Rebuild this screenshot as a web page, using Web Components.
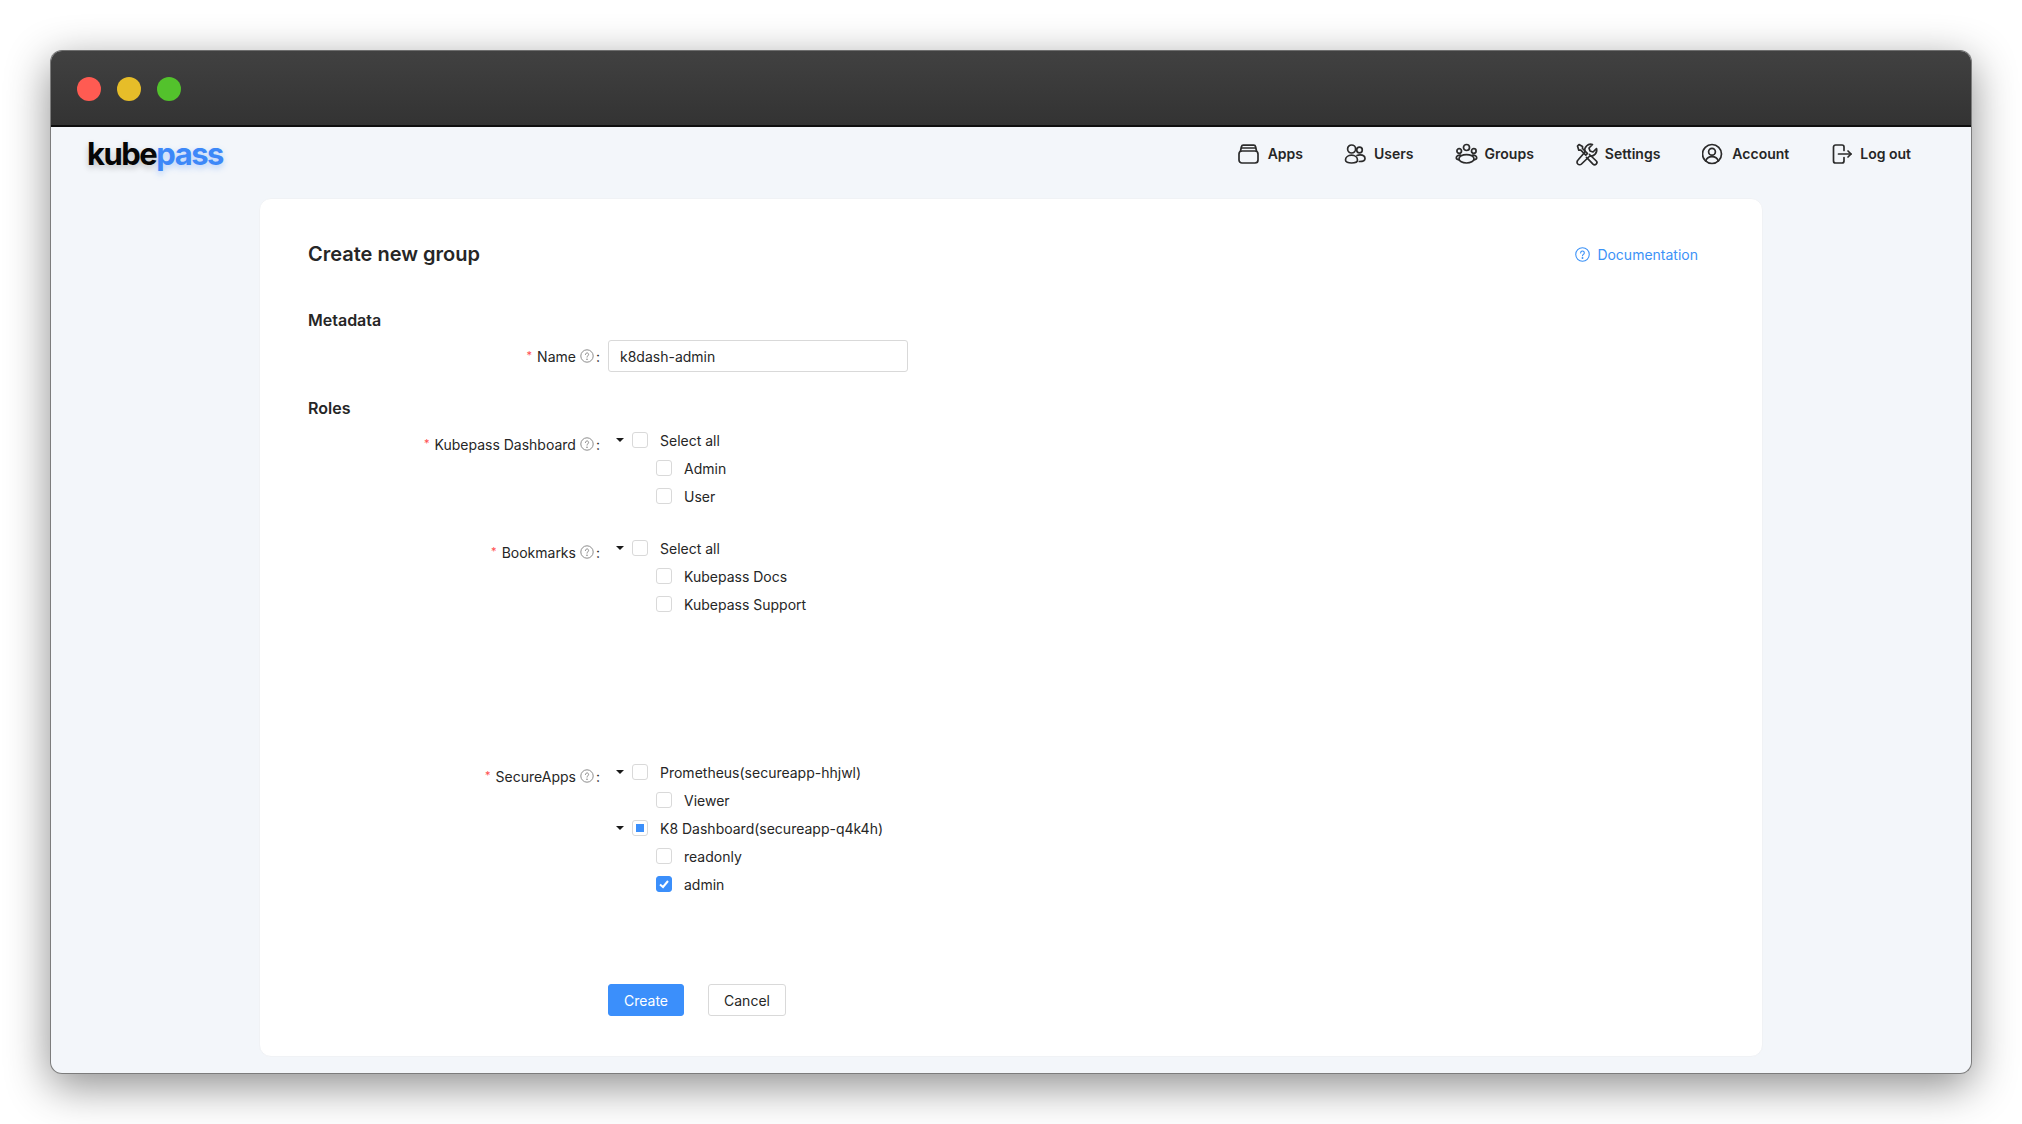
<!DOCTYPE html>
<html>
<head>
<meta charset="utf-8">
<title>kubepass</title>
<style>
  html, body { margin: 0; height: 100%; background: #fff; }
  body { font-family: Inter, "Liberation Sans", sans-serif; color: #262626; overflow: hidden; }
</style>
</head>
<body>
<app-window>
  <top-nav slot="nav">
    <nav-item icon="apps" gap="41">Apps</nav-item>
    <nav-item icon="users" gap="41">Users</nav-item>
    <nav-item icon="groups" gap="41">Groups</nav-item>
    <nav-item icon="settings" gap="42">Settings</nav-item>
    <nav-item icon="account" gap="41">Account</nav-item>
    <nav-item icon="logout">Log out</nav-item>
  </top-nav>
  <form-card>
    <form-section title="Metadata">
      <form-row label="Name" h="32"><text-input value="k8dash-admin"></text-input></form-row>
    </form-section>
    <form-section title="Roles">
      <form-row label="Kubepass Dashboard" h="84" after="24" tree>
        <tree-node caret>Select all</tree-node>
        <tree-node child>Admin</tree-node>
        <tree-node child>User</tree-node>
      </form-row>
      <form-row label="Bookmarks" h="84" after="140" tree>
        <tree-node caret>Select all</tree-node>
        <tree-node child>Kubepass Docs</tree-node>
        <tree-node child>Kubepass Support</tree-node>
      </form-row>
      <form-row label="SecureApps" h="140" tree>
        <tree-node caret>Prometheus(secureapp-hhjwl)</tree-node>
        <tree-node child>Viewer</tree-node>
        <tree-node caret state="half">K8 Dashboard(secureapp-q4k4h)</tree-node>
        <tree-node child>readonly</tree-node>
        <tree-node child state="checked">admin</tree-node>
      </form-row>
    </form-section>
    <form-actions></form-actions>
  </form-card>
</app-window>

<script>
const NAV_ICONS = {
  apps: '<rect x="1" y="9" width="19" height="12" rx="3"/><path d="M2.500 9 3.500 4.500a1.800 1.800 0 0 1 1.800-1.400h10.400a1.800 1.800 0 0 1 1.800 1.400L18.500 9"/><path d="M3.500 6h14"/>',
  users: '<circle cx="7.600" cy="7" r="4"/><circle cx="15.500" cy="8" r="2.800"/><path d="M1.500 18c0-2.800 2.700-4.800 6-4.800s6 2 6 4.800c0 2-2.700 3-6 3s-6-1-6-3z"/><path d="M13 13.500c.9-.4 2-.6 3-.6 3 0 5 1.500 5 3.800 0 1.900-2 2.800-5.700 2.800"/>',
  groups: '<circle cx="11.500" cy="5.500" r="3"/><circle cx="4.200" cy="9" r="2.300"/><circle cx="18.800" cy="9" r="2.300"/><ellipse cx="11.500" cy="16.800" rx="7.500" ry="4.200"/><path d="M5.500 13.200c-2.300-.3-4.200.9-4.200 2.500 0 1.200 1.100 1.900 2.700 2.100"/><path d="M17.500 13.200c2.300-.3 4.200.9 4.200 2.500 0 1.200-1.100 1.900-2.700 2.100"/>',
  settings: '<path d="M21.500 6.500 18 10l-3-1-1-3 3.500-3.500a6 6 0 0 0-7.500 7.500L2.800 18.300a2.600 2.600 0 0 0 3.700 3.700l8.300-8a6 6 0 0 0 6.700-7.500z"/><path d="M2.500 4 4 2.500l3.500 2v2l5 5-1.700 1.700-5-5h-2z"/><path d="M14.500 12.500l6.800 6.500a2.300 2.300 0 0 1-3.300 3.200l-6.500-6.800"/>',
  account: '<circle cx="10" cy="12" r="9.500"/><circle cx="10" cy="9.700" r="3.400"/><path d="M3.800 19c.8-2.700 3.200-4.300 6.200-4.300s5.400 1.600 6.200 4.300"/>',
  logout: '<path d="M14 8.500V5a2 2 0 0 0-2-2H5.500a2 2 0 0 0-2 2v14a2 2 0 0 0 2 2H12a2 2 0 0 0 2-2v-3.500"/><path d="M8.500 12H21"/><path d="M18 9l3 3-3 3"/>'
};

class AppWindow extends HTMLElement {
  connectedCallback() {
    this.attachShadow({ mode: 'open' });
    this.shadowRoot.innerHTML = `
      <style>
        :host {
          display: flex;
          flex-direction: column;
          box-sizing: border-box;
          width: 1922px;
          height: 1024px;
          margin: 50px 0 0 50px;
          border-radius: 12px;
          overflow: hidden;
          background: #f3f6fa;
          border: 1px solid #7c7c7c;
          border-top-color: #6e6e6e;
          box-shadow: 0 12px 44px rgba(0,0,0,.45);
        }
        .bar {
          flex: none;
          height: 76px;
          border-bottom: 2px solid #0e0e0e;
          background: linear-gradient(#414141, #333);
          display: flex;
          align-items: center;
          gap: 16px;
          padding: 2px 0 0 26px;
          box-sizing: border-box;
        }
        .dot { width: 24px; height: 24px; border-radius: 50%; }
        .main { flex: 1; display: flex; flex-direction: column; align-items: center; }
      </style>
      <div class="bar">
        <span class="dot" style="background:#ff5b52"></span>
        <span class="dot" style="background:#e6bd29"></span>
        <span class="dot" style="background:#53c22c"></span>
      </div>
      <slot name="nav"></slot>
      <div class="main"><slot></slot></div>`;
  }
}

class TopNav extends HTMLElement {
  connectedCallback() {
    this.attachShadow({ mode: 'open' });
    this.shadowRoot.innerHTML = `
      <style>
        :host {
          display: flex;
          align-items: flex-start;
          justify-content: space-between;
          height: 71px;
          padding: 0 60px 0 36px;
        }
        .logo {
          font-size: 31px;
          font-weight: 700;
          line-height: 40px;
          letter-spacing: -1.5px;
          margin-top: 7px;
          color: #060606;
          text-shadow: 0 3px 6px rgba(0,0,0,.22);
        }
        .logo span { color: #3d88f8; text-shadow: 0 3px 6px rgba(61,136,248,.35); }
        nav { display: flex; margin-top: 15px; }
      </style>
      <div class="logo">kube<span>pass</span></div>
      <nav><slot></slot></nav>`;
  }
}

class NavItem extends HTMLElement {
  connectedCallback() {
    this.attachShadow({ mode: 'open' });
    const gap = this.getAttribute('gap') || 0;
    this.shadowRoot.innerHTML = `
      <style>
        :host {
          display: flex;
          align-items: center;
          gap: 6px;
          height: 24px;
          margin-right: ${gap}px;
          font-size: 14px;
          font-weight: 600;
          color: #262626;
        }
        span { padding-bottom: 2px; }
        svg { width: 24px; height: 24px; fill: none; stroke: #2b2b2b; stroke-width: 1.700; stroke-linecap: round; stroke-linejoin: round; }
      </style>
      <svg viewBox="0 0 24 24">${NAV_ICONS[this.getAttribute('icon')]}</svg>
      <span><slot></slot></span>`;
  }
}

class FormCard extends HTMLElement {
  connectedCallback() {
    this.attachShadow({ mode: 'open' });
    this.shadowRoot.innerHTML = `
      <style>
        :host {
          display: block;
          box-sizing: border-box;
          width: 1504px;
          height: 859px;
          padding: 41px 64px 0 48px;
          background: #fff;
          border: 1px solid #f0f2f5;
          border-radius: 12px;
        }
        header { display: flex; justify-content: space-between; align-items: center; height: 28px; margin-bottom: 42px; }
        h1 { margin: 0; font-size: 20px; font-weight: 600; color: #262626; }
        a { display: flex; align-items: center; gap: 7px; color: #3c92f7; font-size: 14px; text-decoration: none; }
        svg { width: 15px; height: 15px; fill: none; stroke: currentColor; }
      </style>
      <header>
        <h1>Create new group</h1>
        <a href="#">
          <svg viewBox="0 0 14 14"><circle cx="7" cy="7" r="6.300"/><path d="M5.300 5.500a1.700 1.700 0 1 1 2.600 1.400c-.6.400-.9.700-.9 1.300" stroke-linecap="round"/><circle cx="7" cy="10.200" r=".4" fill="currentColor"/></svg>
          Documentation
        </a>
      </header>
      <slot></slot>`;
  }
}

class FormSection extends HTMLElement {
  connectedCallback() {
    this.attachShadow({ mode: 'open' });
    this.shadowRoot.innerHTML = `
      <style>
        :host { display: block; margin-bottom: 26px; }
        h2 { margin: 0 0 10px; font-size: 16px; line-height: 20px; font-weight: 600; color: #262626; }
      </style>
      <h2>${this.getAttribute('title')}</h2>
      <slot></slot>`;
  }
}

class FormRow extends HTMLElement {
  connectedCallback() {
    this.attachShadow({ mode: 'open' });
    this.shadowRoot.innerHTML = `
      <style>
        :host {
          display: grid;
          grid-template-columns: 292px 1fr;
          column-gap: 8px;
          height: ${this.getAttribute('h')}px;
          margin-bottom: ${this.getAttribute('after') || 0}px;
          font-size: 14px;
          color: #262626;
        }
        .label { display: flex; align-items: center; justify-content: flex-end; height: 32px; }
        .req { color: #ff4d4f; font-size: 11px; margin-right: 5px; position: relative; top: -1px; }
        svg { width: 14px; height: 14px; margin: 0 2px 0 4px; fill: none; stroke: #8c8c8c; }
        .body { margin-top: ${this.hasAttribute('tree') ? -2 : 0}px; }
      </style>
      <div class="label">
        <span class="req">*</span>${this.getAttribute('label')}
        <svg viewBox="0 0 14 14"><circle cx="7" cy="7" r="6.200"/><path d="M5.400 5.500a1.600 1.600 0 1 1 2.500 1.300c-.6.400-.9.700-.9 1.300" stroke-linecap="round"/><circle cx="7" cy="10.200" r=".35" fill="#8c8c8c"/></svg>:
      </div>
      <div class="body"><slot></slot></div>`;
  }
}

class TextInput extends HTMLElement {
  connectedCallback() {
    this.attachShadow({ mode: 'open' });
    this.shadowRoot.innerHTML = `
      <style>
        :host { display: block; width: 300px; height: 32px; }
        input {
          box-sizing: border-box;
          width: 100%;
          height: 100%;
          padding: 0 11px;
          border: 1px solid #d9d9d9;
          border-radius: 3px;
          font: 14px Inter, sans-serif;
          color: #262626;
          outline: none;
        }
      </style>
      <input type="text" value="${this.getAttribute('value')}">`;
  }
}

class TreeNode extends HTMLElement {
  connectedCallback() {
    this.attachShadow({ mode: 'open' });
    const child = this.hasAttribute('child');
    const state = this.getAttribute('state') || '';
    this.shadowRoot.innerHTML = `
      <style>
        :host {
          display: flex;
          align-items: center;
          height: 28px;
          padding-left: ${child ? 48 : 8}px;
          font-size: 14px;
          color: #262626;
        }
        .caret {
          width: 0; height: 0; margin-right: 8px;
          border-left: 4px solid transparent;
          border-right: 4px solid transparent;
          border-top: 4px solid #1a1a1a;
        }
        .box {
          box-sizing: border-box;
          display: flex;
          align-items: center;
          justify-content: center;
          width: 16px; height: 16px;
          margin-right: 12px;
          border: 1px solid #d9d9d9;
          border-radius: 3px;
          background: #fff;
        }
        .box.half::after { content: ""; width: 8px; height: 8px; background: #3b8ffb; }
        .box.checked { background: #3b8ffb; border-color: #3b8ffb; }
        .box svg { width: 12px; height: 12px; fill: none; stroke: #fff; stroke-width: 2; }
      </style>
      ${this.hasAttribute('caret') ? '<span class="caret"></span>' : ''}
      <span class="box ${state}">${state === 'checked' ? '<svg viewBox="0 0 12 12"><path d="M2 6.500 5 9l5-6"/></svg>' : ''}</span>
      <slot></slot>`;
  }
}

class FormActions extends HTMLElement {
  connectedCallback() {
    this.attachShadow({ mode: 'open' });
    this.shadowRoot.innerHTML = `
      <style>
        :host { display: flex; gap: 24px; padding: 58px 0 0 300px; }
        button {
          box-sizing: border-box;
          height: 32px;
          border-radius: 3px;
          font: 14px Inter, sans-serif;
          border: 1px solid #d9d9d9;
          background: #fff;
          color: #262626;
          padding: 0;
        }
        .primary { width: 76px; background: #3b8ffb; border-color: #3b8ffb; color: #fff; }
        .plain { width: 78px; }
      </style>
      <button class="primary">Create</button>
      <button class="plain">Cancel</button>`;
  }
}

customElements.define('app-window', AppWindow);
customElements.define('top-nav', TopNav);
customElements.define('nav-item', NavItem);
customElements.define('form-card', FormCard);
customElements.define('form-section', FormSection);
customElements.define('form-row', FormRow);
customElements.define('text-input', TextInput);
customElements.define('tree-node', TreeNode);
customElements.define('form-actions', FormActions);
</script>
</body>
</html>
